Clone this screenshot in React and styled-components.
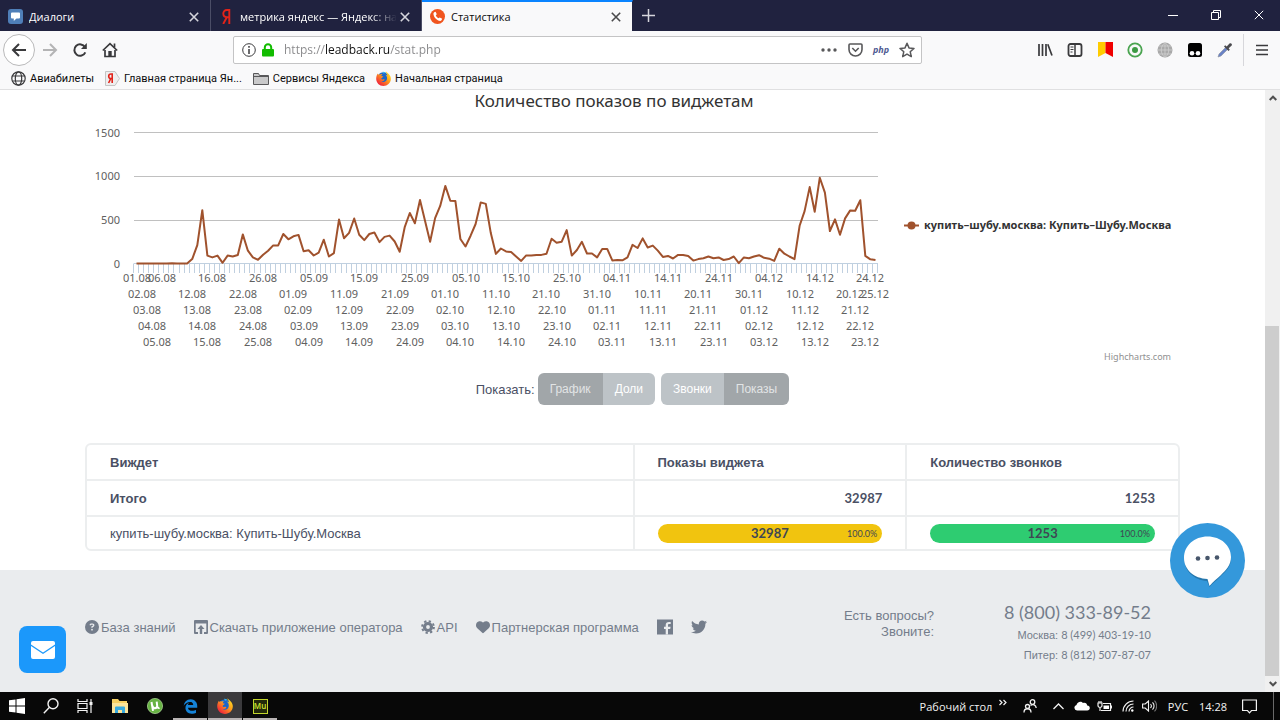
import React from "react";
import styled, { createGlobalStyle, css } from "styled-components";
import { FaCircleQuestion, FaHeart, FaTwitter, FaEdgeLegacy } from "react-icons/fa6";

const GlobalStyle = createGlobalStyle`
  *, *::before, *::after { box-sizing: border-box; }
  body { margin: 0; background: #fff; }
  button { border: 0; padding: 0; margin: 0; background: none; font: inherit; color: inherit; cursor: pointer; }
  svg { display: block; flex: none; }
`;

const UI_FONT = '"Open Sans", "Noto Sans", sans-serif';
const CHART_FONT = '"Noto Sans", "Open Sans", sans-serif';
const TEXT_FONT = '"Liberation Sans", Arial, sans-serif';
const NUMBER_FONT = 'Lato, "Liberation Sans", sans-serif';

/* ---------- window ---------- */

const Window = styled.div`
  display: flex;
  flex-direction: column;
  min-height: 100vh;
  font-family: ${UI_FONT};
  font-size: 11px;
`;

const TabStrip = styled.div`
  display: flex;
  height: 31px;
  background: #20223f;
  color: #fff;
`;

const Tab = styled.div`
  display: flex;
  align-items: center;
  width: 211px;
  padding: 2px 10px 0 8px;
  border-right: 1px solid ${(p) => (p.$active ? "#20223f" : "#4b4d66")};
  ${(p) =>
    p.$active &&
    css`
      padding-top: 0;
      border-top: 2px solid #0a84ff;
      background: #f9f9fa;
      color: #0c0c0d;
    `}
`;

const TabTitle = styled.button`
  flex: 1;
  min-width: 0;
  margin: 0 2px 0 6px;
  overflow: hidden;
  font-size: 11px;
  text-align: left;
  white-space: nowrap;
  ${(p) => p.$fade && css`
    mask-image: linear-gradient(90deg, #000 calc(100% - 26px), transparent);
  `}
`;

const IconButton = styled.button`
  display: flex;
  align-items: center;
  justify-content: center;
  width: ${(p) => p.$w || 30}px;
  height: ${(p) => p.$h || 30}px;
`;

const WindowControls = styled.div`
  display: flex;
  margin-left: auto;
`;

const Toolbar = styled.div`
  display: flex;
  align-items: center;
  height: 37px;
  padding: 0 3px;
  background: #f9f9fa;
  color: #3a3a3c;
`;

const BackButton = styled(IconButton)`
  width: 32px;
  height: 32px;
  border: 1px solid #b9b9ba;
  border-radius: 50%;
  background: #fff;
`;

const UrlBar = styled.div`
  display: flex;
  flex: 1;
  align-items: center;
  height: 28px;
  margin: 0 108px;
  padding: 0 1px 0 8px;
  border: 1px solid #c4c4c5;
  border-radius: 2px;
  background: #fff;
`;

const UrlInput = styled.input`
  flex: 1;
  min-width: 0;
  margin-left: 4px;
  padding: 0;
  border: 0;
  outline: 0;
  font-family: ${UI_FONT};
  font-size: 12px;
  color: transparent;
  background: linear-gradient(90deg, #88888a 41px, #111 41px, #111 106px, #88888a 106px);
  background-clip: text;
  -webkit-background-clip: text;
`;

const PhpBadge = styled.button`
  width: 26px;
  height: 28px;
  font-size: 9px;
  font-style: italic;
  font-weight: 700;
  color: #4f5b93;
`;

const Divider = styled.span`
  width: 1px;
  height: 32px;
  margin: 0 3px;
  background: #d7d7db;
`;

const Bookmarks = styled.nav`
  display: flex;
  align-items: center;
  gap: 11px;
  height: 22px;
  padding: 0 11px;
  border-bottom: 1px solid #e0e0e1;
  background: #f9f9fa;
`;

const Bookmark = styled.a`
  display: flex;
  align-items: center;
  gap: 4px;
  font-family: Roboto, ${UI_FONT};
  font-size: 11px;
  color: #0c0c0d;
  text-decoration: none;
  white-space: nowrap;
`;

/* ---------- page ---------- */

const Viewport = styled.div`
  display: flex;
  flex: 1;
  position: relative;
`;

const Page = styled.div`
  display: flex;
  flex: 1;
  flex-direction: column;
  min-width: 0;
  font-family: ${TEXT_FONT};
  font-size: 13px;
  color: #4a5064;
`;

const Container = styled.div`
  width: 100%;
  max-width: 1095px;
  margin: 0 auto;
`;

const ChartSvg = styled.svg`
  width: 100%;
  height: auto;
  font-family: ${CHART_FONT};
  font-size: 11px;
  fill: #606060;
`;

const ChartTitle = styled.text`
  font-size: 17px;
  fill: #333;
`;

const Switches = styled.div`
  display: flex;
  align-items: center;
  justify-content: center;
  height: 32px;
  margin: 8px 0 38px;
`;

const SwitchLabel = styled.span`
  margin-right: 3px;
`;

const Group = styled.div`
  display: flex;
  height: 32px;
  overflow: hidden;
  border-radius: 6px;
  & + & {
    margin-left: 6px;
  }
`;

const Toggle = styled.button`
  padding: 0 12px;
  font-size: 12px;
  color: ${(p) => (p.$on ? "#e2e4e5" : "#fff")};
  background: ${(p) => (p.$on ? "#a1a6a9" : "#bdc3c7")};
`;

const Table = styled.table`
  width: 100%;
  margin-bottom: 19px;
  border: 2px solid #eceeef;
  border-radius: 6px;
  border-spacing: 0;
  table-layout: fixed;
`;

const Cell = styled.td`
  width: ${(p) => p.$w};
  height: ${(p) => (p.$last ? 32 : 36)}px;
  padding: 0 23px;
  border-bottom: ${(p) => (p.$last ? 0 : 2)}px solid #eceeef;
  border-left: ${(p) => (p.$first ? 0 : 2)}px solid #eceeef;
  font-family: ${(p) => (p.$number ? NUMBER_FONT : TEXT_FONT)};
  font-weight: ${(p) => (p.$bold ? 700 : 400)};
  text-align: ${(p) => (p.$number ? "right" : "left")};
`;

const Bar = styled.div`
  display: grid;
  grid-template-columns: 1fr auto 1fr;
  align-items: center;
  height: 19px;
  padding: 0 5px;
  border-radius: 10px;
  font-weight: 700;
  color: #3f4754;
  background: ${(p) => p.$color};
  & > span {
    grid-column: 2;
  }
  & > small {
    font-size: 9px;
    font-weight: 400;
  }
`;

const Footer = styled.footer`
  flex: 1;
  min-height: 122px;
  background: #eaecee;
  color: #747d8b;
`;

const FooterRow = styled(Container)`
  display: flex;
  align-items: flex-start;
  padding: 30px 29px 0 0;
`;

const FooterLinks = styled.nav`
  display: flex;
  flex: 1;
  align-items: center;
  gap: 18px;
  height: 54px;
`;

const FooterLink = styled.a`
  display: flex;
  align-items: center;
  gap: 2px;
  color: inherit;
  text-decoration: none;
  white-space: nowrap;
`;

const Question = styled.p`
  margin: 8px 0 0;
  line-height: 16px;
  text-align: right;
`;

const Phones = styled.address`
  width: 217px;
  font-style: normal;
  text-align: right;
`;

const Phone = styled.a`
  display: block;
  font-family: ${(p) => (p.$big ? NUMBER_FONT : TEXT_FONT)};
  font-size: ${(p) => (p.$big ? 18 : 11)}px;
  line-height: ${(p) => (p.$big ? 25 : 19)}px;
  color: inherit;
  text-decoration: none;
`;

const Num = styled.span`
  font-family: ${NUMBER_FONT};
`;

const Scrollbar = styled.div`
  display: flex;
  flex-direction: column;
  align-items: center;
  width: 15px;
  padding: 5px 0;
  background: #f0f0f0;
`;

const Track = styled.div`
  flex: 1;
  display: flex;
  flex-direction: column;
  justify-content: flex-end;
  width: 100%;
  margin: 2px 0 5px;
`;

const Thumb = styled.div`
  height: 61%;
  margin-right: 1px;
  background: #cdcdcd;
`;

const ChatButton = styled.button`
  position: absolute;
  right: 35px;
  bottom: 94px;
  width: 75px;
  height: 75px;
`;

const MailButton = styled.button`
  position: absolute;
  left: 19px;
  bottom: 19px;
  display: flex;
  align-items: center;
  justify-content: center;
  width: 47px;
  height: 47px;
  border-radius: 8px;
  background: #1b98fb;
`;

/* ---------- taskbar ---------- */

const Taskbar = styled.div`
  display: flex;
  height: 28px;
  background: #080808;
  color: #f2f2f2;
`;

const Task = styled.button`
  display: flex;
  align-items: center;
  justify-content: center;
  width: 34px;
  height: 28px;
  border-bottom: ${(p) => (p.$open ? "2px solid #b9b4b4" : "0")};
  padding-top: ${(p) => (p.$open ? 2 : 0)}px;
  background: ${(p) => (p.$active ? "#3b3a3c" : "none")};
`;

const Pinned = styled.div`
  display: flex;
  gap: 1px;
  margin-left: 1px;
`;

const MuseIcon = styled.span`
  width: 15px;
  height: 15px;
  border: 1px solid #c3d62c;
  background: #23290a;
  font-size: 8px;
  font-weight: 600;
  line-height: 12px;
  text-align: center;
  color: #d3e62f;
`;

const Tray = styled.div`
  display: flex;
  align-items: center;
  margin-left: auto;
  padding-right: 3px;
`;

const TrayItem = styled.button`
  display: flex;
  align-items: center;
  justify-content: center;
  width: ${(p) => p.$w || 23}px;
  height: 28px;
  white-space: nowrap;
`;

const ShowDesktop = styled.span`
  width: 1px;
  height: 28px;
  background: #6a6a6a;
`;

/* ---------- icons ---------- */

const Line = ({ w = 16, h = 16, sw = 2, children, color = "currentColor" }) => (
  <svg width={w} height={h} viewBox={`0 0 ${w} ${h}`} fill="none" stroke={color} strokeWidth={sw} aria-hidden="true">
    {children}
  </svg>
);

const Cross = ({ size = 10, sw = 1.6, color }) => (
  <Line w={size} h={size} sw={sw} color={color}>
    <path d={`M.8.8 ${size - 0.8} ${size - 0.8}M${size - 0.8}.8.8 ${size - 0.8}`} />
  </Line>
);

const DialogIcon = () => (
  <svg width="15" height="15" viewBox="0 0 15 15" aria-hidden="true">
    <rect width="15" height="15" rx="3" fill="#4f7fb8" />
    <path d="M4 3.500h7a1 1 0 0 1 1 1v4a1 1 0 0 1-1 1H8.500L5.800 12V9.500H4a1 1 0 0 1-1-1v-4a1 1 0 0 1 1-1z" fill="#fff" />
  </svg>
);

const YandexMark = ({ w = 9, h = 15 }) => (
  <svg width={w} height={h} viewBox="0 0 9 15" fill="none" stroke="#e2231a" strokeWidth="1.900" aria-hidden="true">
    <path d="M7.300 15V1H5C2.500 1 1.300 2.700 1.300 4.600 1.300 6.700 2.600 8.200 5 8.200h2.300M4.800 8.200 1.200 15" />
  </svg>
);

const YandexTag = () => (
  <svg width="15" height="15" viewBox="0 0 15 15" aria-hidden="true">
    <path d="M.5.5h9.500L14.500 7.500 10 14.500H.5z" fill="#eee" stroke="#c4c4c4" />
    <path d="M7.200 12V3H6C4.500 3 3.700 4 3.700 5.200 3.700 6.600 4.600 7.500 6 7.500h1.200M5.800 7.500 3.600 12" fill="none" stroke="#e2231a" strokeWidth="1.600" />
  </svg>
);

const PhoneIcon = () => (
  <svg width="15" height="15" viewBox="0 0 15 15" aria-hidden="true">
    <circle cx="7.500" cy="7.500" r="7.500" fill="#f0541e" />
    <path d="M4.200 3.300 5.600 2.700 6.800 5.300 5.800 6.300C6.200 7.500 7.200 8.700 8.600 9.300L9.700 8.400 12.200 9.800 11.500 11.300C10.800 12.100 9.500 12 8.200 11.400 5.800 10.300 3.800 8 3.500 5.500 3.400 4.600 3.500 3.800 4.200 3.300z" fill="#fff" />
  </svg>
);

const Firefox = ({ size = 15 }) => (
  <svg width={size} height={size} viewBox="0 0 16 16" aria-hidden="true">
    <defs>
      <linearGradient id="fox" x1="0.900" y1="0.100" x2="0.200" y2="0.900">
        <stop offset="0" stopColor="#ffe226" />
        <stop offset=".45" stopColor="#ff9a1a" />
        <stop offset="1" stopColor="#f0263c" />
      </linearGradient>
    </defs>
    <circle cx="7.700" cy="7.700" r="6.300" fill="#1b66c9" />
    <path d="M7 .8C9 .6 10.300 1.500 11 2.400 9.600 2 8.600 2.200 8 2.800z" fill="#35b2f0" />
    <path d="M10.500.2C11.300 1.400 12.400 1.900 13.300 3 15 4.600 16 6.500 15.800 8.800 15.500 13 12.200 15.900 8 15.900 3.600 15.900.2 12.600.2 8.200.2 6 .9 4 2 2.700L2.300 4C3 3.200 4 3.200 4.700 3.600 5.600 3.200 6.400 3.300 7 3.300 6.100 3.900 5.800 4.600 5.800 5.200L7.800 5.800C7.600 6.700 6 7 5.700 7.800 5.600 8.800 6.500 9.200 7.300 9 8.300 8.600 9 8.800 9.400 9.400 8.500 10.800 6.900 11.300 5.300 10.700 7.600 12.700 11.600 11.600 11.800 8 11.900 5.600 10.800 4.300 9.800 3.600 11 3.700 11.900 4.200 12.400 4.900 12.100 3 10.500 2 10.500.2z" fill="url(#fox)" />
  </svg>
);

const GlobeIcon = () => (
  <Line w={15} h={15} sw={1.2} color="#3a3a3c">
    <circle cx="7.500" cy="7.500" r="6.700" />
    <ellipse cx="7.500" cy="7.500" rx="3.200" ry="6.700" />
    <path d="M1.500 5h12M1.500 10h12" />
  </Line>
);

const FolderIcon = () => (
  <Line w={16} h={14} sw={1} color="#58585a">
    <path d="M.5 12.500v-11h5l1 2h9v9z" fill="#c9c9ca" />
    <path d="M1 4.500h14" />
  </Line>
);

/* ---------- chart ---------- */

const SHOWS = [
  0, 0, 0, 0, 0, 0, 0, 4, 0, 0, 0, 50, 210, 610, 90, 70, 90, 8, 90, 80, 97, 333, 147, 70, 42, 100, 145, 207, 207, 338,
  277, 312, 328, 140, 152, 92, 125, 272, 80, 118, 503, 288, 350, 515, 330, 268, 338, 355, 245, 305, 320, 252, 135, 420,
  578, 460, 727, 490, 250, 520, 660, 888, 718, 715, 280, 195, 318, 452, 700, 682, 348, 110, 172, 138, 130, 80, 30, 93,
  92, 98, 98, 112, 283, 238, 250, 382, 90, 155, 248, 115, 115, 70, 167, 167, 35, 40, 37, 70, 213, 177, 287, 183, 205,
  148, 75, 87, 57, 98, 98, 87, 33, 50, 60, 80, 60, 70, 40, 50, 80, 5, 70, 60, 80, 95, 65, 55, 30, 170, 112, 80, 50,
  432, 600, 875, 592, 982, 812, 372, 505, 330, 516, 608, 605, 725, 87, 48, 40,
];

const PLOT = { left: 49, right: 793, base: 174, unit: 131 / 1500 };
const STEP = (PLOT.right - PLOT.left) / SHOWS.length;
const xAt = (i) => PLOT.left + STEP * (i + 0.5);
const yAt = (v) => PLOT.base - v * PLOT.unit;

const dayLabel = (i) => {
  const date = new Date(Date.UTC(2018, 7, 1 + i));
  const two = (n) => String(n).padStart(2, "0");
  return `${two(date.getUTCDate())}.${two(date.getUTCMonth() + 1)}`;
};

// Labels are staggered over five lines; one in every ten days fits on a line.
const LABELS = SHOWS.map((_, i) => ({ i, row: i % 5 })).filter(
  ({ i, row }) => i % 10 === row + (row === 0 ? 5 : 0) || i === 0 || i === 146
);

const Chart = () => (
  <ChartSvg viewBox="0 0 1095 275" role="img" aria-label="Количество показов по виджетам">
    <ChartTitle x="529" y="17" textAnchor="middle">
      Количество показов по виджетам
    </ChartTitle>
    {[500, 1000, 1500].map((v) => (
      <path key={v} d={`M${PLOT.left} ${Math.ceil(yAt(v)) - 0.5}H${PLOT.right}`} stroke="#c0c0c0" />
    ))}
    {[0, 500, 1000, 1500].map((v) => (
      <text key={v} x="35" y={Math.floor(yAt(v)) + 4} textAnchor="end">
        {v}
      </text>
    ))}
    <path
      d={
        `M${PLOT.left} 173.500H${PLOT.right}` +
        Array.from({ length: SHOWS.length + 1 }, (_, i) => `M${Math.round(PLOT.left + STEP * i) - 0.5} 173.500V183`).join("")
      }
      stroke="#c0d0e0"
    />
    <polyline
      points={SHOWS.map((v, i) => `${xAt(i).toFixed(1)},${(yAt(v) - 0.5).toFixed(1)}`).join(" ")}
      fill="none"
      stroke="#a0522d"
      strokeWidth="2"
      strokeLinejoin="round"
    />
    {LABELS.map(({ i, row }) => (
      <text key={i} x={Math.round(xAt(i))} y={192 + (i === 146 ? 1 : row) * 16} textAnchor="middle">
        {dayLabel(i)}
      </text>
    ))}
    <path d="M819 135.500h15" stroke="#a0522d" strokeWidth="2" />
    <circle cx="826.500" cy="135.500" r="4" fill="#a0522d" />
    <text x="839" y="139" fontWeight="700" fill="#333">
      купить–шубу.москва: Купить–Шубу.Москва
    </text>
    <text x="1086" y="270" textAnchor="end" fontSize="9" fill="#909090">
      Highcharts.com
    </text>
  </ChartSvg>
);

/* ---------- sections ---------- */

const TopBar = () => (
  <>
    <TabStrip role="tablist">
      <Tab>
        <DialogIcon />
        <TabTitle role="tab">Диалоги</TabTitle>
        <IconButton $w={12} aria-label="Закрыть вкладку"><Cross color="#d5d5dc" /></IconButton>
      </Tab>
      <Tab>
        <IconButton as="span" $w={15} $h={15}><YandexMark /></IconButton>
        <TabTitle role="tab" $fade>метрика яндекс — Яндекс: на</TabTitle>
        <IconButton $w={12} aria-label="Закрыть вкладку"><Cross color="#d5d5dc" /></IconButton>
      </Tab>
      <Tab $active>
        <PhoneIcon />
        <TabTitle role="tab" aria-selected="true">Статистика</TabTitle>
        <IconButton $w={12} aria-label="Закрыть вкладку"><Cross color="#4a4a4c" /></IconButton>
      </Tab>
      <IconButton aria-label="Новая вкладка">
        <Line w={13} h={13} sw={1.5} color="#d5d5dc"><path d="M6.500 0v13M0 6.500h13" /></Line>
      </IconButton>
      <WindowControls>
        <IconButton $w={43} aria-label="Свернуть"><Line w={10} h={10} sw={1}><path d="M0 5.500h10" /></Line></IconButton>
        <IconButton $w={43} aria-label="Свернуть в окно">
          <Line w={10} h={10} sw={1}><path d="M.5 2.500h7v7h-7zM2.500 2.500v-2h7v7h-2" /></Line>
        </IconButton>
        <IconButton $w={43} aria-label="Закрыть"><Cross sw={1} /></IconButton>
      </WindowControls>
    </TabStrip>

    <Toolbar>
      <BackButton aria-label="Назад">
        <Line><path d="M15 8H2M8 2 2 8l6 6" /></Line>
      </BackButton>
      <IconButton aria-label="Вперёд">
        <Line color="#b4b4b5"><path d="M1 8h13M8 2l6 6-6 6" /></Line>
      </IconButton>
      <IconButton aria-label="Обновить">
        <Line>
          <path d="M13.300 10.300A5.700 5.700 0 1 1 13 5.200" />
          <path d="M14.800 1v6H9z" fill="currentColor" stroke="none" />
        </Line>
      </IconButton>
      <IconButton aria-label="Домой">
        <Line sw={1.7}>
          <path d="M.8 8.500 8 1.600l7.200 6.900" />
          <path d="M3 8v6.500h10V8" />
          <path d="M6.300 15V9h3.400v6z" fill="currentColor" stroke="none" />
          <path d="M12.500 1.500v4" />
        </Line>
      </IconButton>

      <UrlBar>
        <Line w={14} h={14} sw={1}>
          <circle cx="7" cy="7" r="6.300" />
          <path d="M7 6v5M7 3v1.700" strokeWidth="1.500" />
        </Line>
        <IconButton as="span" $w={24} $h={24}>
          <svg width="12" height="14" viewBox="0 0 12 14" aria-hidden="true">
            <rect y="6" width="12" height="7.500" rx="1" fill="#12bc00" />
            <path d="M2.800 7V4.500a3.200 3.200 0 0 1 6.400 0V7" fill="none" stroke="#12bc00" strokeWidth="2" />
          </svg>
        </IconButton>
        <UrlInput aria-label="Адрес" defaultValue="https://leadback.ru/stat.php" />
        <IconButton $w={26} $h={26} aria-label="Действия">
          <svg width="16" height="4" viewBox="0 0 16 4" fill="#58585a"><circle cx="2" cy="2" r="1.700" /><circle cx="8" cy="2" r="1.700" /><circle cx="14" cy="2" r="1.700" /></svg>
        </IconButton>
        <IconButton $w={26} $h={26} aria-label="Pocket">
          <Line w={15} h={14} sw={1.6} color="#58585a">
            <path d="M2 1h11a1 1 0 0 1 1 1v4.500a6.500 6.500 0 0 1-13 0V2a1 1 0 0 1 1-1zM4.300 5l3.200 3.200L10.700 5" />
          </Line>
        </IconButton>
        <PhpBadge>php</PhpBadge>
        <IconButton $w={26} $h={26} aria-label="В закладки">
          <Line sw={1.5} color="#58585a"><path d="M8 1.300 10 5.900l5 .5-3.800 3.300 1.100 4.900L8 12.100l-4.300 2.500 1.100-4.900L1 6.400l5-.5z" strokeLinejoin="round" /></Line>
        </IconButton>
      </UrlBar>

      <IconButton aria-label="Библиотека">
        <Line><path d="M2 2v12M5.500 2v12M9 2v12M10.800 2.300 15 13.500" strokeWidth="1.700" /></Line>
      </IconButton>
      <IconButton aria-label="Боковая панель">
        <Line sw={1.8}><rect x="1.500" y="2" width="13" height="12" rx="2" /><path d="M8 2v12" strokeWidth="1.500" /><path d="M3.500 5h3M3.500 7.500h3M3.500 10h2" strokeWidth="1" /></Line>
      </IconButton>
      <IconButton aria-label="Яндекс.Закладки">
        <svg width="15" height="15" viewBox="0 0 15 15"><path d="M0 0h7.500v11L0 15z" fill="#fc0" /><path d="M7.500 0H15v15l-7.500-4z" fill="#f00000" /></svg>
      </IconButton>
      <IconButton aria-label="Дополнение">
        <svg width="16" height="16" viewBox="0 0 16 16"><circle cx="8" cy="8" r="6.700" fill="none" stroke="#4aa450" strokeWidth="1.800" /><circle cx="8" cy="8" r="3" fill="#3c9a43" /></svg>
      </IconButton>
      <IconButton aria-label="Сеть">
        <svg width="16" height="16" viewBox="0 0 16 16"><circle cx="8" cy="8" r="7.500" fill="#a9a9a9" /><path d="M8 .5v15M.5 8h15M2 4h12M2 12h12M8 .5c-5 4-5 11 0 15M8 .5c5 4 5 11 0 15" fill="none" stroke="#d0d0d0" strokeWidth=".8" /></svg>
      </IconButton>
      <IconButton aria-label="Tampermonkey">
        <svg width="14" height="14" viewBox="0 0 14 14"><rect width="14" height="14" rx="2.500" fill="#000" /><circle cx="4" cy="10.300" r="2.300" fill="#fff" /><circle cx="10" cy="10.300" r="2.300" fill="#fff" /></svg>
      </IconButton>
      <IconButton aria-label="Пипетка">
        <svg width="16" height="16" viewBox="0 0 16 16"><path d="M1 15 2 12 8.500 5.500 10.500 7.500 4 14z" fill="#6a83c6" stroke="#8a8f9c" strokeWidth=".6" /><path d="M7 4.500 8.200 3.300 9.700 4.500 12.500 1.500C14 .5 15.600 2 14.700 3.500L11.700 6.300 12.800 7.700 11.500 9z" fill="#4a4a4e" /></svg>
      </IconButton>
      <Divider />
      <IconButton aria-label="Меню">
        <Line w={12} h={12}><path d="M0 1.500h12M0 6h12M0 10.500h12" strokeWidth="1.600" /></Line>
      </IconButton>
    </Toolbar>

    <Bookmarks>
      <Bookmark href="#tickets"><GlobeIcon />Авиабилеты</Bookmark>
      <Bookmark href="#yandex"><YandexTag />Главная страница Ян...</Bookmark>
      <Bookmark href="#services"><FolderIcon />Сервисы Яндекса</Bookmark>
      <Bookmark href="#start"><Firefox />Начальная страница</Bookmark>
    </Bookmarks>
  </>
);

const StatsTable = () => (
  <Table>
    <thead>
      <tr>
        <Cell as="th" scope="col" $w="50%" $bold $first>Виждет</Cell>
        <Cell as="th" scope="col" $w="25%" $bold>Показы виджета</Cell>
        <Cell as="th" scope="col" $w="25%" $bold>Количество звонков</Cell>
      </tr>
    </thead>
    <tbody>
      <tr>
        <Cell $bold $first>Итого</Cell>
        <Cell $bold $number>32987</Cell>
        <Cell $bold $number>1253</Cell>
      </tr>
      <tr>
        <Cell $first $last>купить-шубу.москва: Купить-Шубу.Москва</Cell>
        <Cell $number $last><Bar $color="#f1c40f"><span>32987</span><small>100.0%</small></Bar></Cell>
        <Cell $number $last><Bar $color="#2ecc71"><span>1253</span><small>100.0%</small></Bar></Cell>
      </tr>
    </tbody>
  </Table>
);

const PageFooter = () => (
  <Footer>
    <FooterRow>
      <FooterLinks>
        <FooterLink href="#base"><FaCircleQuestion size={14} />База знаний</FooterLink>
        <FooterLink href="#app">
          <svg width="14" height="14" viewBox="0 0 14 14" fill="currentColor" aria-hidden="true">
            <path d="M1 0h12a1 1 0 0 1 1 1v12a1 1 0 0 1-1 1h-3v-2h2.300V3.500H1.700V12H4v2H1a1 1 0 0 1-1-1V1a1 1 0 0 1 1-1z" />
            <path d="M7 5l3.500 4H8.200v5H5.800V9H3.500z" />
          </svg>
          Скачать приложение оператора
        </FooterLink>
        <FooterLink href="#api">
          <svg width="14" height="14" viewBox="0 0 14 14" fill="none" stroke="currentColor" aria-hidden="true">
            <circle cx="7" cy="7" r="3.500" strokeWidth="3.200" />
            <circle cx="7" cy="7" r="5.900" strokeWidth="2" strokeDasharray="2.300 2.330" />
          </svg>
          API
        </FooterLink>
        <FooterLink href="#partners"><FaHeart size={14} />Партнерская программа</FooterLink>
        <FooterLink href="#facebook" aria-label="Facebook">
          <svg width="16" height="16" viewBox="0 0 16 16" aria-hidden="true">
            <rect width="16" height="15" y="0.500" fill="currentColor" />
            <path d="M11 15.500V10h2.200l.4-2.200H11V6.300c0-.8.300-1.200 1.200-1.200h1.500v-2c-3.400-.5-5 .4-5 3v1.700H7V10h1.700v5.500z" fill="#eaecee" />
          </svg>
        </FooterLink>
        <FooterLink href="#twitter" aria-label="Twitter"><FaTwitter size={16} /></FooterLink>
      </FooterLinks>
      <Question>Есть вопросы?<br />Звоните:</Question>
      <Phones>
        <Phone $big href="tel:88003338952">8 (800) 333-89-52</Phone>
        <Phone href="tel:84994031910">Москва: <Num>8 (499) 403-19-10</Num></Phone>
        <Phone href="tel:88125078707">Питер: <Num>8 (812) 507-87-07</Num></Phone>
      </Phones>
    </FooterRow>
  </Footer>
);

const DesktopBar = () => (
  <Taskbar>
    <Task aria-label="Пуск">
      <svg width="16" height="16" viewBox="0 0 16 16" fill="#fff"><path d="M0 2.300 6.500 1.400v6H0zM7.500 1.200 16 0v7.400H7.500zM0 8.500h6.500v6L0 13.700zM7.500 8.500H16V16l-8.500-1.300z" /></svg>
    </Task>
    <Task aria-label="Поиск"><Line sw={1.4}><circle cx="10" cy="5.800" r="5" /><path d="M6.500 9.300.8 15.300" /></Line></Task>
    <Task aria-label="Представление задач">
      <Line sw={1.2}><path d="M1 1v2.500h9V1M1 15v-2.500h9V15M1 5.500h9v5H1zM14 1v14" /><path d="M12.500 4h3v3h-3z" fill="currentColor" stroke="none" /></Line>
    </Task>
    <Pinned>
      <Task aria-label="Проводник">
        <svg width="16" height="14" viewBox="0 0 16 14"><path d="M0 0h6l1.500 2H15v12H0z" fill="#f5cf62" /><path d="M0 4h16v10H0z" fill="#fbe49b" /><path d="M3 14V8.500a1 1 0 0 1 1-1h8a1 1 0 0 1 1 1V14h-3v-3H6v3z" fill="#39aade" /></svg>
      </Task>
      <Task aria-label="uTorrent">
        <svg width="16" height="16" viewBox="0 0 16 16"><circle cx="8" cy="8" r="7.600" fill="#68b345" stroke="#b5dc9d" strokeWidth=".7" /><path d="M4.500 4 6 12.800M5.200 7.500c.6 3.500 4.600 3.500 5 .5L9.700 3.700M10.200 8c.2 1.800 1.200 2.300 2.300 1.800" fill="none" stroke="#fff" strokeWidth="2" /></svg>
      </Task>
      <Task $open aria-label="Edge"><FaEdgeLegacy size={15} color="#1583d8" /></Task>
      <Task $open $active aria-label="Firefox"><Firefox size={16} /></Task>
      <Task $open aria-label="Muse"><MuseIcon>Mu</MuseIcon></Task>
    </Pinned>
    <Tray>
      <TrayItem $w={72}>Рабочий стол</TrayItem>
      <TrayItem $w={22} aria-label="Ещё"><Line w={8} h={14} sw={1.2}><path d="M.5 1l2.500 2.500L.5 6M4.500 1 7 3.500 4.500 6" /></Line></TrayItem>
      <TrayItem $w={32} aria-label="Люди">
        <Line w={14} h={14} sw={1.3}><circle cx="9.500" cy="3" r="2.300" /><circle cx="4.500" cy="7.500" r="2" /><path d="M1 13.500c0-5 7-5 7 0M7.500 6.500c2.500-2 5.500-.5 5.700 2.500" /></Line>
      </TrayItem>
      <TrayItem $w={24} aria-label="Значки"><Line w={11} h={7} sw={1.3}><path d="M.5 6 5.500 1l5 5" /></Line></TrayItem>
      <TrayItem aria-label="OneDrive">
        <svg width="16" height="10" viewBox="0 0 16 10" fill="#fff"><path d="M3 9.500a2.800 2.800 0 0 1-.5-5.500C3 1 7-.5 9 2c2.500-.8 4 .7 4.200 2.600 3.600.2 3.300 4.900 0 4.900z" /></svg>
      </TrayItem>
      <TrayItem aria-label="Батарея">
        <Line w={15} h={11} sw={1.2}><path d="M6 2.500h7.500v7H4M14.500 4.500v3M1 2h4v2.500a2 2 0 0 1-4 0zM2 2V0M4 2V0M3 6.500V10" /><path d="M6.500 4.500H12v3.500H6.500z" fill="#fff" stroke="none" /></Line>
      </TrayItem>
      <TrayItem aria-label="Сеть">
        <Line w={12} h={12} sw={1.2}><path d="M1 11.500A10.500 10.500 0 0 1 11.500 1M4 11.500A7.500 7.500 0 0 1 11.500 4M7 11.500A4.500 4.500 0 0 1 11.500 7" /><circle cx="10.300" cy="10.500" r="1.200" fill="#fff" stroke="none" /></Line>
      </TrayItem>
      <TrayItem $w={20} aria-label="Громкость">
        <Line w={15} h={12} sw={1.1}><path d="M.6 4h2.600L6.500 1v10L3.200 8H.6zM8.500 4a3 3 0 0 1 0 4M10.500 2.300a5.200 5.200 0 0 1 0 7.400" /><path d="M12.500.7a7.500 7.500 0 0 1 0 10.600" stroke="#777" /></Line>
      </TrayItem>
      <TrayItem $w={38}>РУС</TrayItem>
      <TrayItem $w={32}>14:28</TrayItem>
      <TrayItem $w={40} aria-label="Уведомления">
        <Line w={15} h={15} sw={1.2}><path d="M.6 1h13.800v10.500H9.500L7.500 13.800l-2-2.300H.6z" /></Line>
      </TrayItem>
      <TrayItem as="span" $w={8}><ShowDesktop /></TrayItem>
    </Tray>
  </Taskbar>
);

export default function App() {
  return (
    <Window>
      <GlobalStyle />
      <TopBar />
      <Viewport>
        <Page>
          <Container>
            <Chart />
            <Switches>
              <SwitchLabel>Показать:</SwitchLabel>
              <Group>
                <Toggle $on>График</Toggle>
                <Toggle>Доли</Toggle>
              </Group>
              <Group>
                <Toggle>Звонки</Toggle>
                <Toggle $on>Показы</Toggle>
              </Group>
            </Switches>
            <StatsTable />
          </Container>
          <PageFooter />
        </Page>
        <Scrollbar aria-hidden="true">
          <Line w={8} h={6} sw={2} color="#505050"><path d="M.7 5 4 1.700 7.300 5" /></Line>
          <Track><Thumb /></Track>
          <Line w={8} h={6} sw={2} color="#505050"><path d="M.7 1 4 4.300 7.300 1" /></Line>
        </Scrollbar>
        <ChatButton aria-label="Чат">
          <svg width="75" height="75" viewBox="0 0 75 75">
            <circle cx="37.500" cy="37.500" r="37.500" fill="#3498db" />
            <path d="M38 16c13 0 23 8.500 23 20 0 8-6 13-11 18-4 4-7 6-10.500 10L37 58C24 57 14.500 48 14.500 37 14.500 25 25 16 38 16z" fill="#2577ad" />
            <path d="M37.500 13.500c13.500 0 23.500 9 23.500 20.500 0 8-5 13-10 18-4 4-8 6.500-11.500 11L37.500 56C24 55.500 14 46.500 14 35c0-12.500 10.500-21.500 23.500-21.500z" fill="#fff" />
            <g fill="#47566b"><circle cx="28" cy="35.500" r="2.300" /><circle cx="37.500" cy="35" r="2.300" /><circle cx="47" cy="34.500" r="2.300" /></g>
          </svg>
        </ChatButton>
        <MailButton aria-label="Написать">
          <svg width="24" height="18" viewBox="0 0 24 18" fill="#fff">
            <path d="M2 0h20a2 2 0 0 1 2 2v1.500L12 11.500 0 3.500V2a2 2 0 0 1 2-2z" />
            <path d="M0 5 12 13 24 5V16a2 2 0 0 1-2 2H2a2 2 0 0 1-2-2z" />
          </svg>
        </MailButton>
      </Viewport>
      <DesktopBar />
    </Window>
  );
}
